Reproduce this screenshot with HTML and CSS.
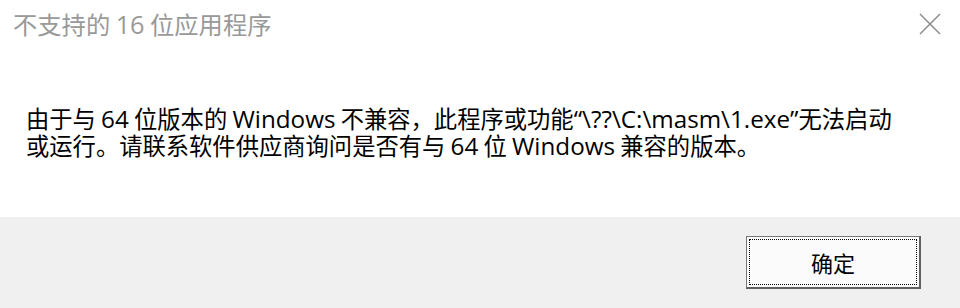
FILE: index.html
```html
<!DOCTYPE html>
<html lang="zh-CN">
<head>
<meta charset="utf-8">
<title>不支持的 16 位应用程序</title>
<link rel="stylesheet" href="styles.css">
</head>
<body>
<div class="dialog">
  <header class="titlebar">
    <h1 class="title">不支持的 <span class="lat">16</span> 位应用程序</h1>
    <button class="close" aria-label="关闭">
      <svg width="22" height="22" viewBox="0 0 22 22"><path d="M1 1 L21 21 M21 1 L1 21" stroke="#8c8c8c" stroke-width="1.5" fill="none"/></svg>
    </button>
  </header>
  <main class="content">
    <p class="message">
      <span class="line">由于与 <span class="lat">64</span> 位版本的 <span class="lat">Windows</span> 不兼容，此程序或功能<span class="lat">“\??\C:\masm\1.exe”</span>无法启动</span>
      <span class="line">或运行。请联系软件供应商询问是否有与 <span class="lat">64</span> 位 <span class="lat">Windows</span> 兼容的版本。</span>
    </p>
  </main>
  <footer class="footer">
    <button class="ok"><span class="focus">确定</span></button>
  </footer>
</div>
</body>
</html>
```

FILE: styles.css
```css
html, body {
  margin: 0;
  padding: 0;
  background: #ffffff;
}

body {
  font-family: "Noto Sans CJK SC", "Noto Sans", sans-serif;
  color: #000;
}

.dialog {
  width: 960px;
  height: 308px;
  display: flex;
  flex-direction: column;
  background: #ffffff;
  overflow: hidden;
}

.lat {
  font-family: "Open Sans", "Noto Sans", sans-serif;
  font-size: 1.04em;
}

.titlebar {
  height: 48px;
  display: flex;
  align-items: center;
  justify-content: space-between;
  padding: 0 19px 0 13px;
}

.title {
  margin: 0;
  font-size: 24.3px;
  font-weight: 400;
  line-height: 30px;
  color: #999999;
  white-space: nowrap;
}

.close {
  border: 0;
  background: transparent;
  padding: 0;
  width: 22px;
  height: 22px;
  display: flex;
  margin-top: -1px;
}

.content {
  flex: 1;
  padding: 57px 26px 0 26px;
}

.message {
  margin: 0;
  font-size: 23.3px;
  line-height: 27px;
}

.line {
  display: block;
  white-space: nowrap;
}

.footer {
  height: 91px;
  box-sizing: border-box;
  background: #f0f0f0;
  display: flex;
  justify-content: flex-end;
  align-items: flex-start;
  padding: 19px 39px 0 0;
}

.ok {
  width: 175px;
  height: 53px;
  box-sizing: border-box;
  background: #fbfbfb;
  border-style: solid;
  border-color: #767676 #5f5f5f #5f5f5f #767676;
  border-width: 1px 2px 2px 1px;
  padding: 2px;
  display: flex;
  font-family: "Noto Sans CJK SC", sans-serif;
  font-size: 22px;
  color: #000;
}

.focus {
  flex: 1;
  border: 1px dotted #000;
  display: flex;
  align-items: center;
  justify-content: center;
  line-height: 1;
}
```
